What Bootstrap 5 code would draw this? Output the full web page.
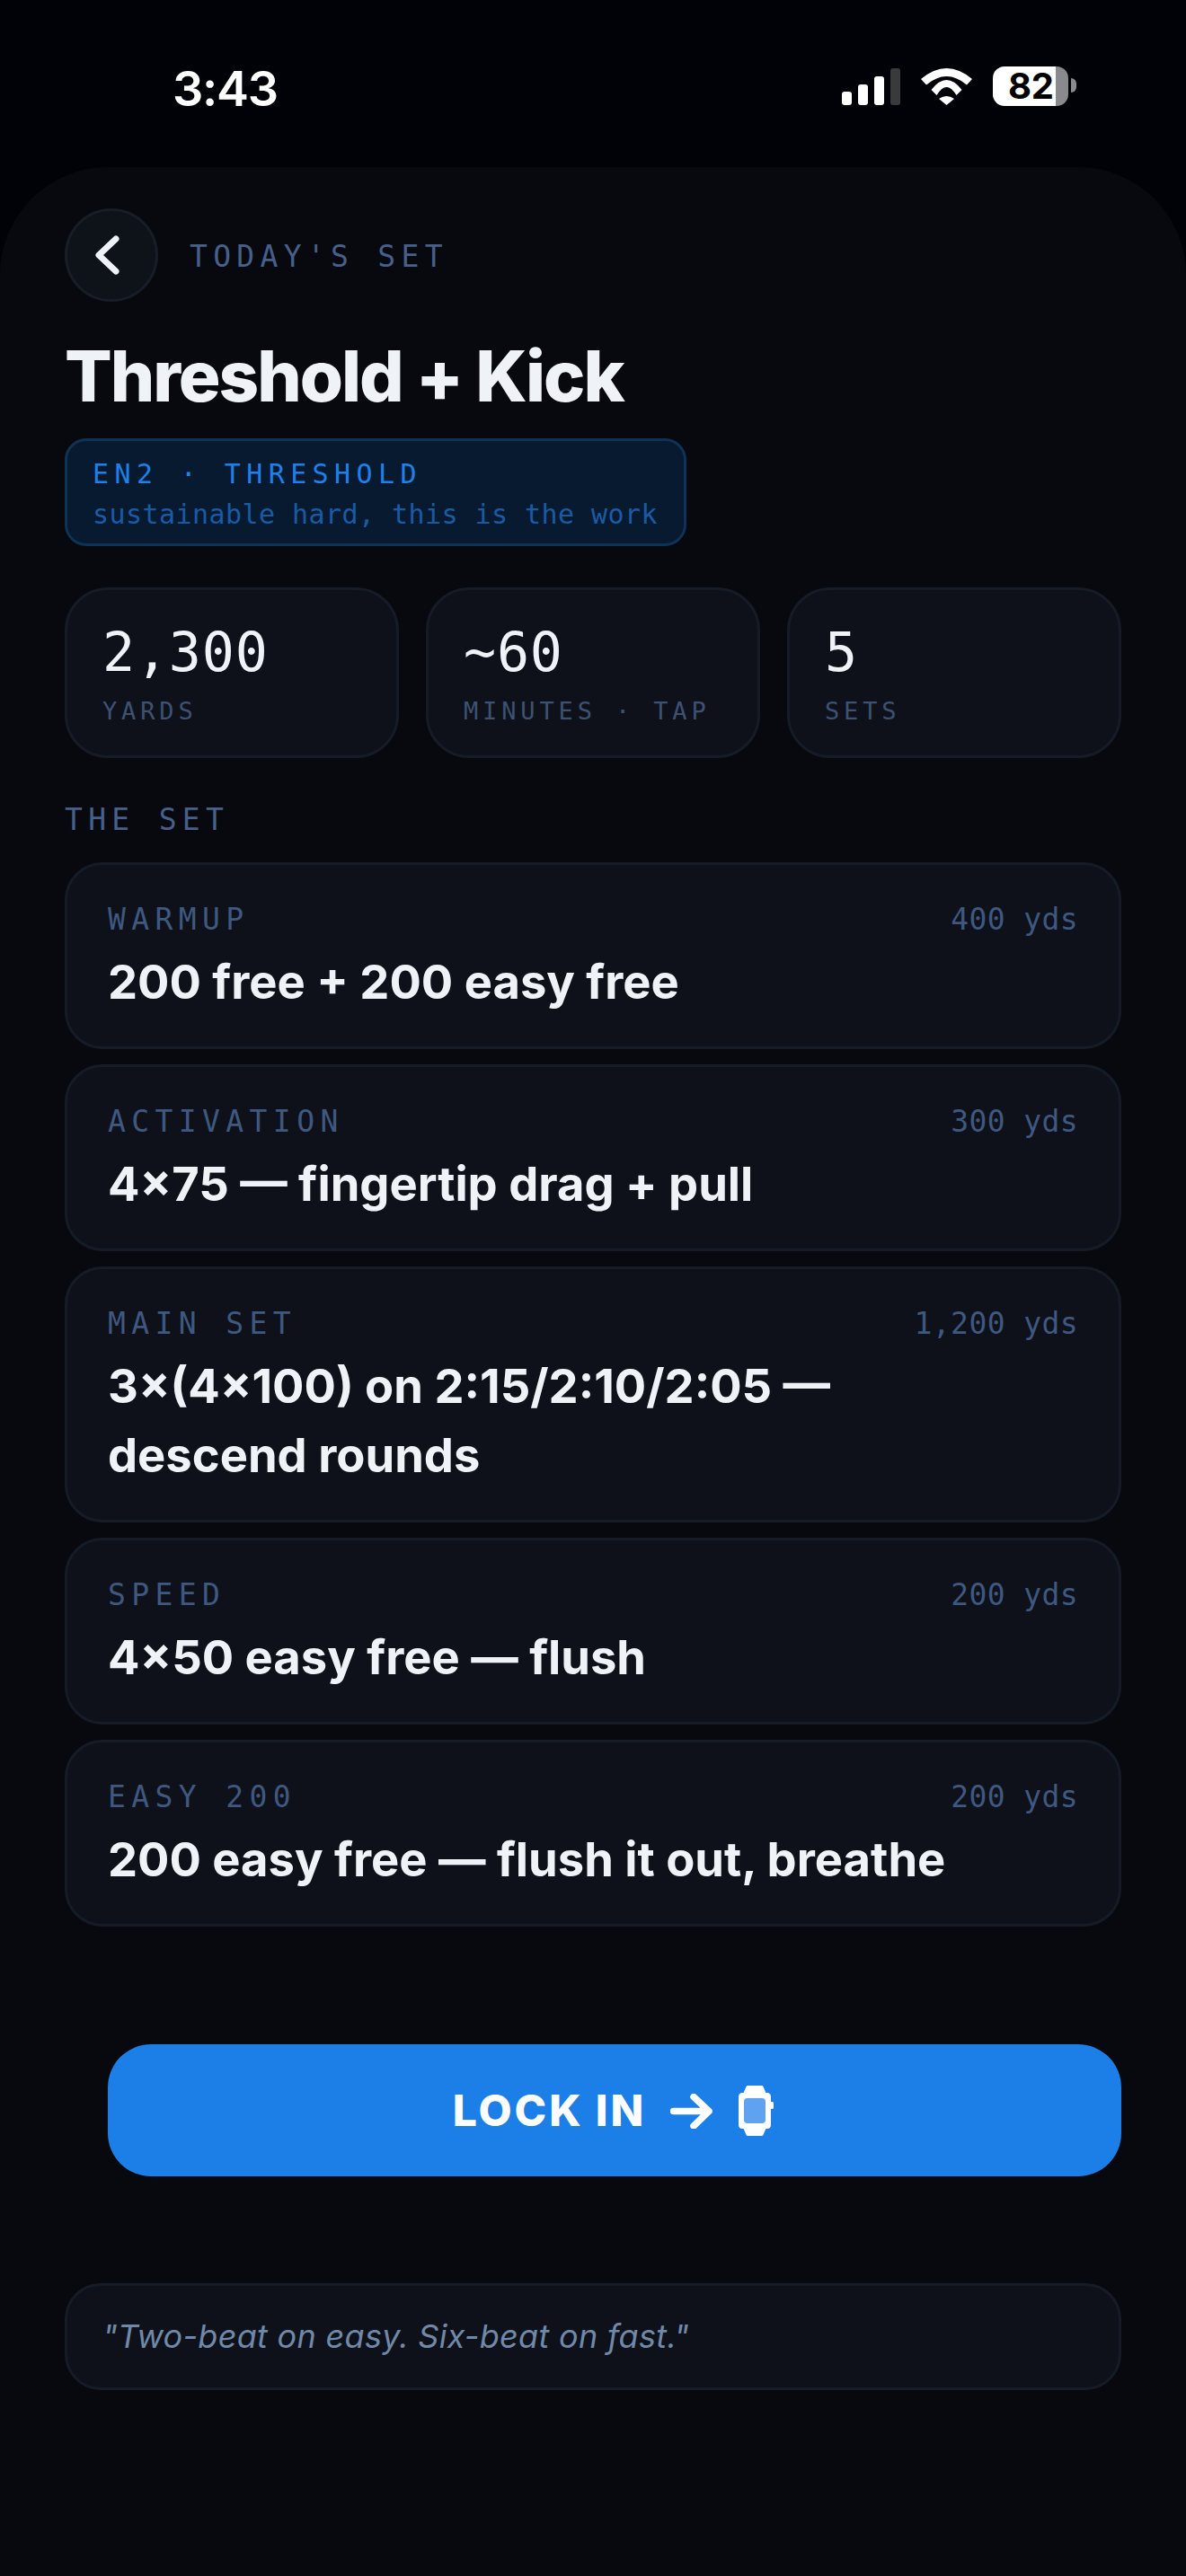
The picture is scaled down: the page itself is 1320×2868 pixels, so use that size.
<!DOCTYPE html>
<html lang="en">
<head>
  <meta charset="UTF-8" />
  <meta name="viewport" content="width=device-width, initial-scale=1" />
  <title>Threshold + Kick</title>
  <link href="https://cdn.jsdelivr.net/npm/bootstrap@5.3.2/dist/css/bootstrap.min.css" rel="stylesheet" />
  <style>
    body {
      background: #010207;
      color: #eff3f7;
      font-family: Inter, "Liberation Sans", sans-serif;
      min-height: 2868px;
    }
    .mono { font-family: "DejaVu Sans Mono", "Liberation Mono", monospace; }
    .status-bar { height: 186px; padding: 72px 122px 0 192px; color: #fff; }
    .clock { font-size: 54px; line-height: 54px; font-weight: 600; letter-spacing: -1.3px; }
    .signal { height: 41px; margin-top: 4px; gap: 7px; }
    .signal i { width: 11px; border-radius: 3px; background: #fff; }
    .signal i:last-child { background: #3a3a3c; }
    .wifi { margin: 4px 23px 0 23px; }
    .battery {
      width: 84px; height: 44px; margin-top: 2px; border-radius: 13px;
      background: linear-gradient(90deg, #fff 70px, #8a8a8e 70px);
      color: #000; font-size: 40px; font-weight: 700; line-height: 44px;
      padding-left: 17px; letter-spacing: -0.3px;
    }
    .battery-nub { width: 6px; height: 16px; margin: 15px 0 0 3px; background: #8a8a8e; border-radius: 0 8px 8px 0; }

    .sheet {
      background: #07090e;
      border-radius: 120px 120px 0 0;
      padding: 46px 72px 0;
      min-height: 2682px;
    }
    .top-row { gap: 35px; }
    .back-btn {
      width: 104px; height: 104px; border-radius: 50%;
      background: #0e1219; border: 3px solid #171e28;
    }
    .back-btn svg { margin-right: 10px; }
    .eyebrow { font-size: 33px; letter-spacing: 6.3px; color: #46608a; line-height: 49.5px; }
    .today-label { padding-top: 3px; }
    .set-title { font-size: 78px; font-weight: 800; letter-spacing: -2.05px; line-height: 93.6px; margin: 36px 0 22px; color: #eff3f7; }
    .zone-chip {
      background: #081a30; border: 3px solid #0f3356; border-radius: 24px;
      padding: 14px 29px 10px 28px; font-size: 30px; line-height: 45px;
    }
    .zone-name { color: #1e80e8; letter-spacing: 6.4px; }
    .zone-note { color: #1a5aa5; letter-spacing: 0.44px; }
    .stat-row { margin-top: 46px; gap: 30px; }
    .stat-box, .step-box, .quote-box { background: #0e1119; border: 3px solid #161c27; }
    .stat-box { flex: 1 1 0; border-radius: 48px; padding: 33px 39px; }
    .stat-value { font-size: 60px; line-height: 72px; letter-spacing: 0.8px; color: #eff3f7; }
    .stat-label { font-size: 27px; line-height: 32px; margin-top: 14px; letter-spacing: 4.86px; color: #3d5272; white-space: nowrap; }
    .set-heading { margin: 44px 0 23px; }
    .step-list { gap: 17px; }
    .step-box { border-radius: 42px; padding: 34px 45px 33.5px; }
    .step-label { font-size: 33px; line-height: 53px; letter-spacing: 6.4px; color: #3f5880; }
    .step-yds { font-size: 33px; line-height: 53px; letter-spacing: 0.4px; color: #3f5880; }
    .step-text { font-size: 52.5px; line-height: 76.5px; font-weight: 700; margin-top: 5px; color: #eff3f7; }
    .lock-btn {
      margin: 131px 0 119px 48px; height: 147px; width: 1128px; border: 0; padding: 2px 3px 0 0;
      border-radius: 48px; background: #1c7fe8; color: #fff;
      font-size: 48px; font-weight: 800; letter-spacing: 2.9px; gap: 27px;
    }
    .lock-btn:hover, .lock-btn:active { background: #1c7fe8; color: #fff; }
    .watch-icon { margin-left: 2px; }
    .quote-box { border-radius: 40px; padding: 30px 39px; font-size: 36px; line-height: 53px; letter-spacing: 0.3px; font-style: italic; color: #7089a8; }
  </style>
</head>
<body>

  <div class="status-bar d-flex justify-content-between align-items-start">
    <div class="clock">3:43</div>
    <div class="d-flex align-items-start">
      <div class="signal d-flex align-items-end">
        <i style="height: 15px"></i><i style="height: 23px"></i><i style="height: 32px"></i><i style="height: 41px"></i>
      </div>
      <svg class="wifi" width="57" height="41" viewBox="0 0 57 41" fill="#fff">
        <path d="M0 12Q28.5 -12 57 12L51 18.5Q28.5 -0.5 6 18.5Z" />
        <path d="M11.5 24Q28.5 2 45.5 24L39.5 30Q28.5 12 17.5 30Z" />
        <path d="M20 34Q28.5 28 37 34L28.5 41Z" />
      </svg>
      <div class="battery">82</div>
      <div class="battery-nub"></div>
    </div>
  </div>

  <main class="sheet">
    <div class="top-row d-flex align-items-center">
      <div class="back-btn d-flex align-items-center justify-content-center flex-shrink-0">
        <svg width="28" height="44" viewBox="0 0 28 44" fill="none" stroke="#eff3f7" stroke-width="7" stroke-linecap="round" stroke-linejoin="round">
          <path d="M24 4L5 22L24 40" />
        </svg>
      </div>
      <div class="eyebrow today-label mono">TODAY'S SET</div>
    </div>

    <h1 class="set-title">Threshold + Kick</h1>

    <div class="zone-chip mono d-inline-block">
      <div class="zone-name">EN2 · THRESHOLD</div>
      <div class="zone-note">sustainable hard, this is the work</div>
    </div>

    <div class="stat-row d-flex">
      <div class="stat-box">
        <div class="stat-value mono">2,300</div>
        <div class="stat-label mono">YARDS</div>
      </div>
      <div class="stat-box">
        <div class="stat-value mono">~60</div>
        <div class="stat-label mono">MINUTES · TAP</div>
      </div>
      <div class="stat-box">
        <div class="stat-value mono">5</div>
        <div class="stat-label mono">SETS</div>
      </div>
    </div>

    <div class="eyebrow set-heading mono">THE SET</div>

    <div class="step-list d-flex flex-column">
      <div class="step-box">
        <div class="d-flex justify-content-between"><span class="step-label mono">WARMUP</span><span class="step-yds mono">400 yds</span></div>
        <div class="step-text">200 free + 200 easy free</div>
      </div>
      <div class="step-box">
        <div class="d-flex justify-content-between"><span class="step-label mono">ACTIVATION</span><span class="step-yds mono">300 yds</span></div>
        <div class="step-text">4×75 — fingertip drag + pull</div>
      </div>
      <div class="step-box">
        <div class="d-flex justify-content-between"><span class="step-label mono">MAIN SET</span><span class="step-yds mono">1,200 yds</span></div>
        <div class="step-text">3×(4×100) on 2:15/2:10/2:05 —<br>descend rounds</div>
      </div>
      <div class="step-box">
        <div class="d-flex justify-content-between"><span class="step-label mono">SPEED</span><span class="step-yds mono">200 yds</span></div>
        <div class="step-text">4×50 easy free — flush</div>
      </div>
      <div class="step-box">
        <div class="d-flex justify-content-between"><span class="step-label mono">EASY 200</span><span class="step-yds mono">200 yds</span></div>
        <div class="step-text">200 easy free — flush it out, breathe</div>
      </div>
    </div>

    <button type="button" class="btn lock-btn d-flex align-items-center justify-content-center">
      <span>LOCK IN</span>
      <svg width="47" height="39" viewBox="0 0 47 39" fill="none" stroke="#fff" stroke-width="7.5" stroke-linecap="round" stroke-linejoin="round">
        <path d="M3.5 19.5H43M26 3.5L43 19.5L26 36" />
      </svg>
      <svg class="watch-icon" width="39" height="56" viewBox="0 0 39 56">
        <path d="M10 1.5H26L29.5 9.5H31.5Q34.5 9.5 34.5 12.5V43.5Q34.5 46.5 31.5 46.5H29.5L26 54.5H10L6.5 46.5H4.5Q1.5 46.5 1.5 43.5V12.5Q1.5 9.5 4.5 9.5H6.5Z" fill="#fff" stroke="#fff" stroke-width="3" stroke-linejoin="round" />
        <rect x="6" y="14" width="24" height="28" rx="4" fill="#5fa3f0" />
        <rect x="35" y="18" width="4" height="8" rx="1.5" fill="#fff" />
      </svg>
    </button>

    <div class="quote-box">"Two-beat on easy. Six-beat on fast."</div>
  </main>

</body>
</html>
